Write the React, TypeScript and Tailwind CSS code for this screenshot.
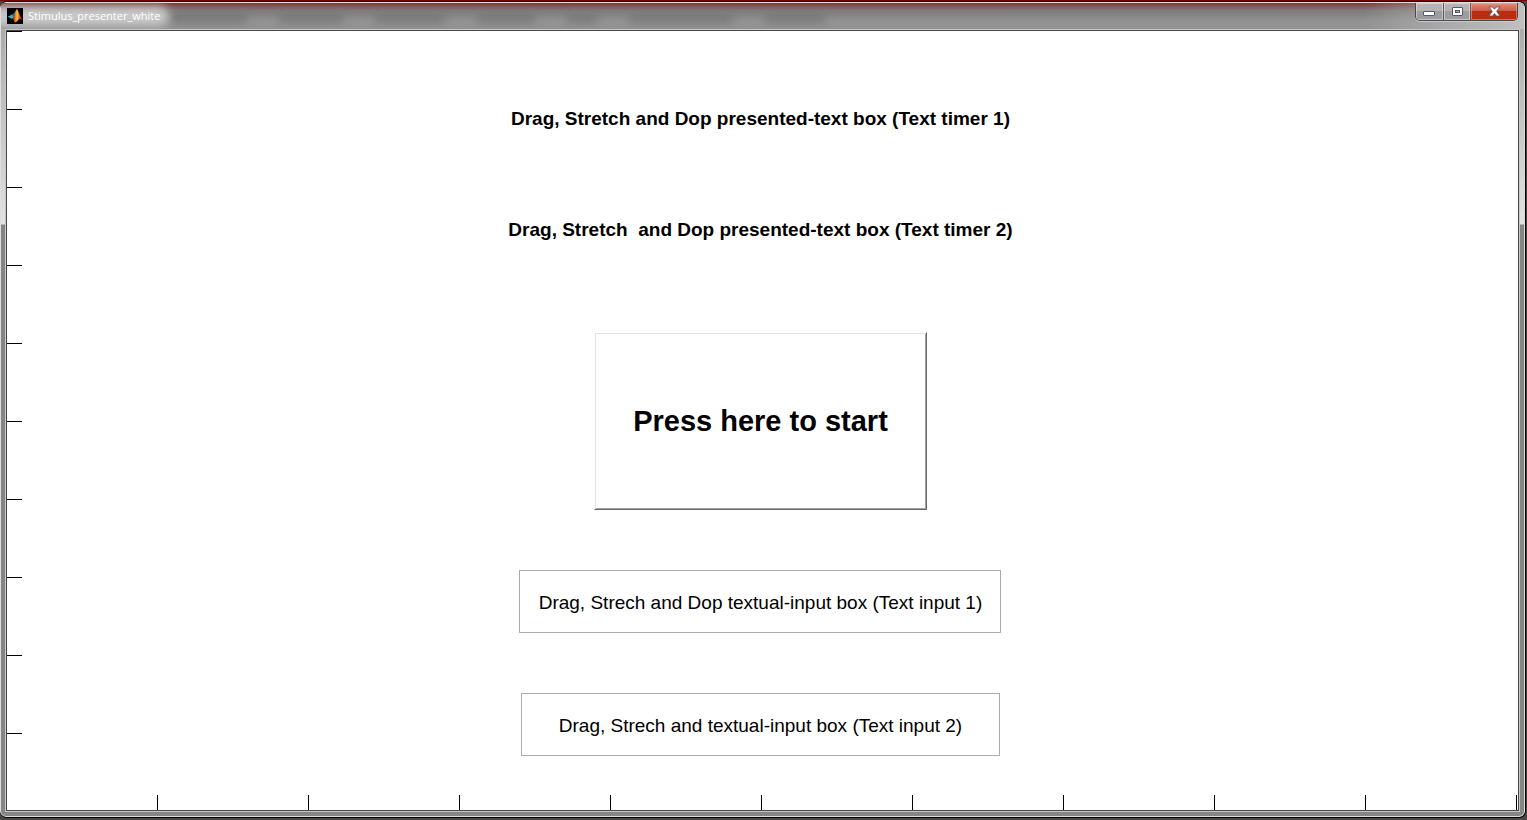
import { useState } from "react";

const ticks = Array.from({ length: 10 }, (_, i) => i);

function AppIcon() {
  return (
    <svg viewBox="0 0 16 16" className="size-4 shrink-0" aria-hidden="true">
      <defs>
        <linearGradient id="flame" x1="0" y1="0" x2="1" y2="0">
          <stop offset="0" stopColor="#5a1408" />
          <stop offset="0.35" stopColor="#f08a1c" />
          <stop offset="0.5" stopColor="#ffc24a" />
          <stop offset="0.7" stopColor="#d9480f" />
          <stop offset="1" stopColor="#9c2a0c" />
        </linearGradient>
      </defs>
      <rect width="16" height="16" fill="#000" />
      <path d="M0.6 8.8 5 6.6 7 8.2 5.2 11 3.6 10.2Z" fill="#4aa9c8" />
      <path d="M5 6.8C7 6 8 3.4 9.6 1.6L8.6 6 7 8.4Z" fill="#2b6f96" />
      <path d="M9.7 1C11.6 2.4 12.8 8.4 15.6 12.2 13.4 10.8 12.4 10.6 11 12.2 9.6 13.6 8.6 14.6 7.4 14.2 7.2 12.4 6.6 11.2 5 11 7.8 9.4 8.2 3 9.7 1Z" fill="url(#flame)" />
    </svg>
  );
}

function WindowControls() {
  return (
    <div className="flex h-[18px] shrink-0 overflow-hidden rounded-b-[5px] border border-t-0 border-[#4b4648] shadow-[0_1px_0_#c9c9c9]">
      <button aria-label="Minimize" className="flex w-[28px] items-center justify-center border-r border-[#5f5a5c] bg-linear-to-b from-[#c3aeb0] from-0% via-[#b4b2b4] via-45% to-[#9d9da0] to-50% shadow-[inset_0_0_0_1px_#ffffff66]">
        <svg width="13" height="11" viewBox="0 0 13 11" aria-hidden="true">
          <rect x="0.5" y="5.5" width="11" height="4" rx="0.5" fill="#fff" stroke="#555a6b" />
        </svg>
      </button>
      <button aria-label="Maximize" className="flex w-[27px] items-center justify-center border-r border-[#5f5a5c] bg-linear-to-b from-[#c3aeb0] from-0% via-[#b4b2b4] via-45% to-[#9d9da0] to-50% shadow-[inset_0_0_0_1px_#ffffff66]">
        <svg width="13" height="11" viewBox="0 0 13 11" aria-hidden="true">
          <rect x="1.5" y="1.5" width="10" height="8" rx="0.5" fill="#fff" stroke="#555a6b" />
          <rect x="4.5" y="4.5" width="4" height="2" fill="#a8a8ab" stroke="#555a6b" />
        </svg>
      </button>
      <button aria-label="Close" className="flex w-[46px] items-center justify-center bg-linear-to-b from-[#dc8f80] from-0% via-[#cd5c48] via-45% to-[#b92c12] to-50% shadow-[inset_0_0_0_1px_#ffb9a077]">
        <svg width="13" height="11" viewBox="0 0 13 11" aria-hidden="true">
          <path d="M1 1H4.6L6.5 3.2 8.4 1H12L8.7 5.3 12 10H8.4L6.5 7.6 4.6 10H1L4.3 5.3Z" fill="#fff" stroke="#555a6b" strokeWidth="0.9" />
        </svg>
      </button>
    </div>
  );
}

function TitleBar() {
  return (
    <header className="relative flex h-[26px] shrink-0 items-start overflow-hidden bg-linear-to-b from-[#7d3838] from-0% via-[#7e7a7a] via-28% to-[#929292] to-70% pr-[6px] pl-[6px]">
      <div aria-hidden="true" className="absolute inset-0 flex items-center pt-1 pl-[168px] blur-[4px]">
        <div className="flex gap-[32px]">
          <i className="h-2 w-[78px] bg-[#757575]" />
          <i className="h-2 w-[64px] bg-[#757575]" />
          <i className="h-2 w-[70px] bg-[#757575]" />
          <i className="h-2 w-[58px] bg-[#757575]" />
          <i className="h-2 w-[30px] bg-[#757575]" />
          <i className="h-2 w-[104px] bg-[#757575]" />
          <i className="h-2 w-[60px] bg-[#757575]" />
        </div>
      </div>
      <div aria-hidden="true" className="absolute top-[3px] -left-3 h-5 w-[180px] rounded-full bg-[#d0d0d0]/90 blur-[5px]" />
      <div aria-hidden="true" className="absolute inset-y-0 right-0 w-[160px] bg-linear-to-r from-transparent to-[#c0c0c0]" />
      <div className="relative flex flex-1 items-center gap-[5px] pt-[5px]">
        <AppIcon />
        <h1 className="font-['Open_Sans',sans-serif] text-[11px] leading-4 font-medium text-white">Stimulus_presenter_white</h1>
      </div>
      <div className="relative">
        <WindowControls />
      </div>
    </header>
  );
}

export default function App() {
  const [first, setFirst] = useState("Drag, Strech and Dop textual-input box (Text input 1)");
  const [second, setSecond] = useState("Drag, Strech and textual-input box (Text input 2)");

  return (
    <div className="flex min-h-screen flex-col border-t border-[#7c0000] bg-[#4a4646] pr-px pb-[2px] font-['Liberation_Sans',Arial,sans-serif] text-black">
      <div className="flex flex-1 flex-col overflow-hidden rounded-[7px] border border-l-0 border-black bg-[#888888]">
        <div className="flex flex-1 flex-col rounded-[6px] border border-[#dedede] bg-linear-to-b from-[#a5a5a5] from-0% via-[#e2e2e2] via-[221px] to-[#858585] to-[222px]">
          <TitleBar />
          <div className="mx-1 mb-1 flex flex-1 border border-[#c8c8c8]">
            <main className="grid flex-1 border border-[#484848] bg-white">
              <div aria-hidden="true" className="col-start-1 row-start-1 -mb-px flex w-[15px] flex-col">
                {ticks.map((t) => (
                  <div key={t} className="flex-1 border-t border-black" />
                ))}
              </div>
              <div aria-hidden="true" className="col-start-1 row-start-1 mr-px flex h-[15px] self-end">
                {ticks.map((t) => (
                  <div key={t} className="flex-1 border-r border-black" />
                ))}
              </div>
              <div className="relative col-start-1 row-start-1 flex flex-col items-center justify-self-center pt-[76px] pr-1 pb-[54px]">
                <p className="text-[19px] leading-6 font-bold">Drag, Stretch and Dop presented-text box (Text timer 1)</p>
                <p className="mt-[87px] text-[19px] leading-6 font-bold whitespace-pre">{"Drag, Stretch  and Dop presented-text box (Text timer 2)"}</p>
                <button className="mt-[90px] h-[178px] w-[333px] border border-t-white border-r-[#696969] border-b-[#696969] border-l-white bg-white pt-[2px] text-[29px] font-bold shadow-[inset_1px_1px_0_#e3e3e3,inset_-1px_-1px_0_#a0a0a0]">
                  Press here to start
                </button>
                <input
                  aria-label="Text input 1"
                  value={first}
                  onChange={(e) => setFirst(e.target.value)}
                  className="mt-[60px] h-[63px] w-[482px] border border-[#abadb3] bg-white pt-[2px] text-center text-[19px]"
                />
                <input
                  aria-label="Text input 2"
                  value={second}
                  onChange={(e) => setSecond(e.target.value)}
                  className="mt-[60px] h-[63px] w-[479px] border border-[#abadb3] bg-white pt-[2px] text-center text-[19px]"
                />
              </div>
            </main>
          </div>
        </div>
      </div>
    </div>
  );
}
